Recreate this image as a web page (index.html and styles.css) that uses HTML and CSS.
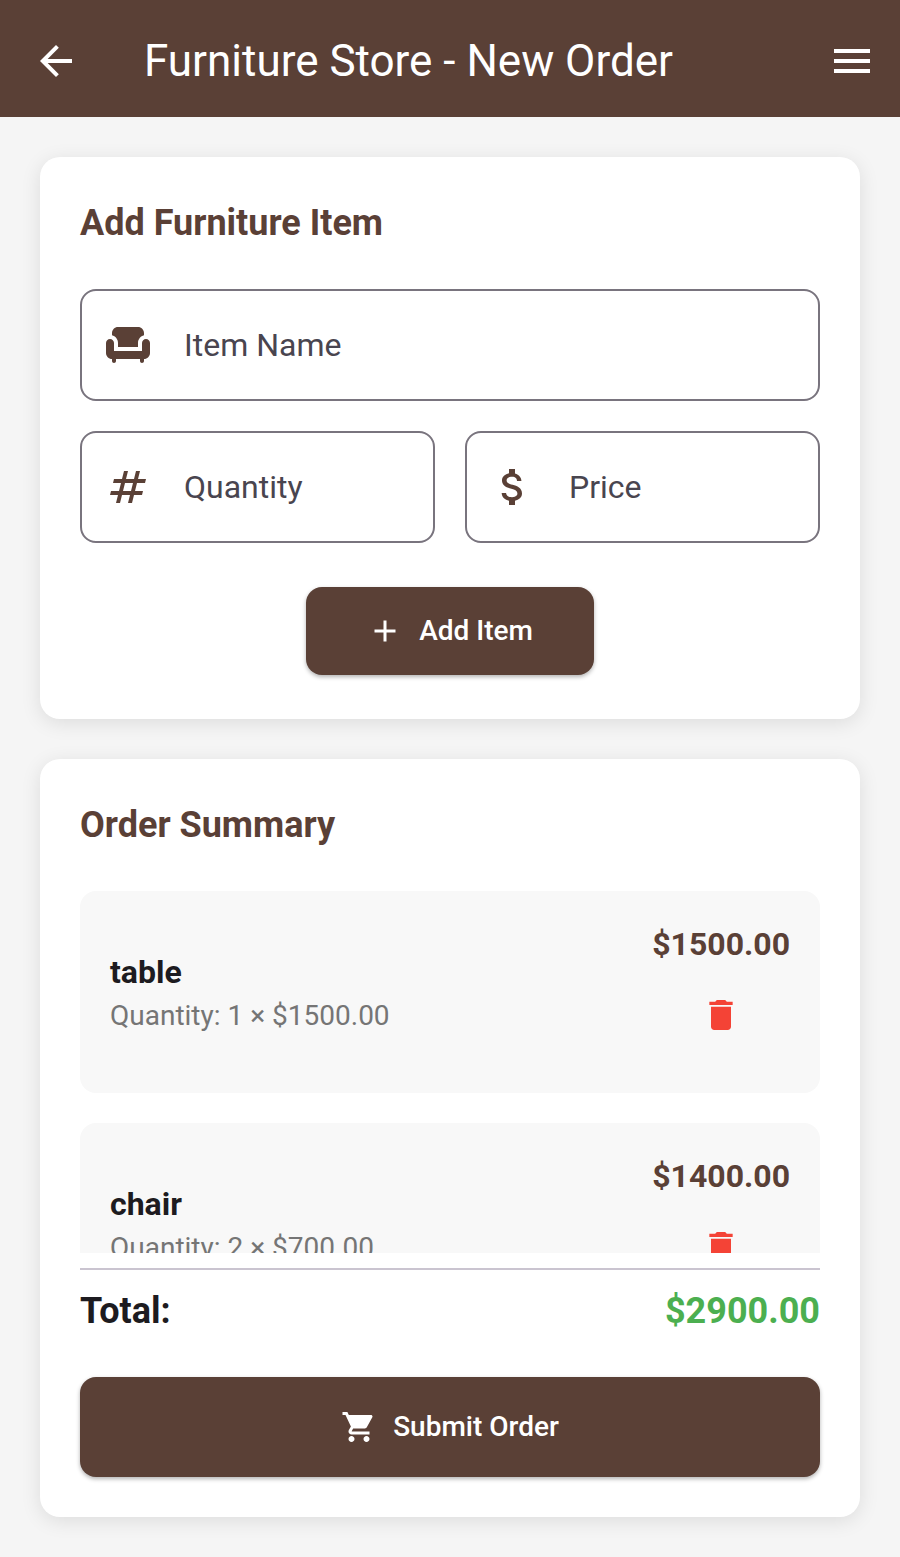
FILE: index.html
```html
<!DOCTYPE html>
<html lang="en">
<head>
<meta charset="utf-8">
<meta name="viewport" content="width=device-width, initial-scale=1">
<title>Furniture Store - New Order</title>
<link rel="stylesheet" href="styles.css">
</head>
<body>
<header class="app-bar">
  <button class="icon-button" type="button" aria-label="Back">
    <svg class="icon icon-large" viewBox="0 0 24 24"><path d="M20 11H7.83l5.59-5.59L12 4l-8 8 8 8 1.41-1.41L7.83 13H20v-2z"/></svg>
  </button>
  <h1 class="app-title">Furniture Store - New Order</h1>
  <button class="icon-button" type="button" aria-label="Menu">
    <svg class="icon icon-large" viewBox="0 0 24 24"><path d="M3 18h18v-2H3v2zm0-5h18v-2H3v2zm0-7v2h18V6H3z"/></svg>
  </button>
</header>
<main class="content">
  <form class="card add-card">
    <h2 class="card-title">Add Furniture Item</h2>
    <div class="fields">
      <label class="field field-wide">
        <svg class="icon icon-large" viewBox="0 0 24 24"><path d="M7 11v2h10v-2c0-1.86 1.28-3.41 3-3.86V6c0-1.65-1.35-3-3-3H7C5.35 3 4 4.35 4 6v1.14c1.72.45 3 2 3 3.86z"/><path d="M21 9c-1.1 0-2 .9-2 2v4H5v-4c0-1.1-.9-2-2-2s-2 .9-2 2v5c0 1.65 1.35 3 3 3v1c0 .55.45 1 1 1s1-.45 1-1v-1h12v1c0 .55.45 1 1 1s1-.45 1-1v-1c1.65 0 3-1.35 3-3v-5c0-1.1-.9-2-2-2z"/></svg>
        <input class="field-input" type="text" placeholder="Item Name" aria-label="Item Name">
      </label>
      <label class="field">
        <svg class="icon icon-large" viewBox="0 0 24 24"><path d="M20.5 10l.5-2h-4l1-4h-2l-1 4h-4l1-4h-2L9 8H5l-.5 2h4l-1 4h-4L3 16h4l-1 4h2l1-4h4l-1 4h2l1-4h4l.5-2h-4l1-4h4zm-7 4h-4l1-4h4l-1 4z"/></svg>
        <input class="field-input" type="text" inputmode="numeric" placeholder="Quantity" aria-label="Quantity">
      </label>
      <label class="field">
        <svg class="icon icon-large" viewBox="0 0 24 24"><path d="M11.8 10.9c-2.27-.59-3-1.2-3-2.15 0-1.09 1.01-1.85 2.7-1.85 1.78 0 2.44.85 2.5 2.1h2.21c-.07-1.72-1.12-3.3-3.21-3.81V3h-3v2.16c-1.94.42-3.5 1.68-3.5 3.61 0 2.31 1.91 3.46 4.7 4.13 2.5.6 3 1.48 3 2.41 0 .69-.49 1.79-2.7 1.79-2.06 0-2.87-.92-2.98-2.1h-2.2c.12 2.19 1.76 3.42 3.68 3.83V21h3v-2.15c1.95-.37 3.5-1.5 3.5-3.55 0-2.84-2.43-3.81-4.7-4.4z"/></svg>
        <input class="field-input" type="text" inputmode="decimal" placeholder="Price" aria-label="Price">
      </label>
    </div>
    <button class="button add-button" type="button">
      <svg class="icon icon-small" viewBox="0 0 24 24"><path d="M19 13h-6v6h-2v-6H5v-2h6V5h2v6h6v2z"/></svg>
      Add Item
    </button>
  </form>
  <section class="card summary-card">
    <h2 class="card-title">Order Summary</h2>
    <ul class="order-list">
      <li class="order-item">
        <div class="item-info">
          <h3 class="item-name">table</h3>
          <p class="item-detail">Quantity: 1 × $1500.00</p>
        </div>
        <div class="item-side">
          <span class="item-price">$1500.00</span>
          <button class="delete-button" type="button" aria-label="Delete table">
            <svg class="icon icon-medium" viewBox="0 0 24 24"><path d="M6 19c0 1.1.9 2 2 2h8c1.1 0 2-.9 2-2V7H6v12zM19 4h-3.5l-1-1h-5l-1 1H5v2h14V4z"/></svg>
          </button>
        </div>
      </li>
      <li class="order-item">
        <div class="item-info">
          <h3 class="item-name">chair</h3>
          <p class="item-detail">Quantity: 2 × $700.00</p>
        </div>
        <div class="item-side">
          <span class="item-price">$1400.00</span>
          <button class="delete-button" type="button" aria-label="Delete chair">
            <svg class="icon icon-medium" viewBox="0 0 24 24"><path d="M6 19c0 1.1.9 2 2 2h8c1.1 0 2-.9 2-2V7H6v12zM19 4h-3.5l-1-1h-5l-1 1H5v2h14V4z"/></svg>
          </button>
        </div>
      </li>
    </ul>
    <hr class="divider">
    <div class="total">
      <span>Total:</span>
      <span class="total-amount">$2900.00</span>
    </div>
    <button class="button submit-button" type="button">
      <svg class="icon icon-small" viewBox="0 0 24 24"><path d="M7 18c-1.1 0-1.99.9-1.99 2S5.9 22 7 22s2-.9 2-2-.9-2-2-2zM1 2v2h2l3.6 7.59-1.35 2.45c-.16.28-.25.61-.25.96 0 1.1.9 2 2 2h12v-2H7.42c-.14 0-.25-.11-.25-.25l.03-.12.9-1.63h7.45c.75 0 1.41-.41 1.75-1.03l3.58-6.49c.08-.14.12-.31.12-.48 0-.55-.45-1-1-1H5.21l-.94-2H1zm16 16c-1.1 0-1.99.9-1.99 2s.89 2 1.99 2 2-.9 2-2-.9-2-2-2z"/></svg>
      Submit Order
    </button>
  </section>
</main>
</body>
</html>
```

FILE: styles.css
```css
:root {
  --brown: #5a4036;
  --ink: #1d1b20;
}

* {
  box-sizing: border-box;
}

body {
  display: flex;
  flex-direction: column;
  height: 100vh;
  margin: 0;
  background: #f5f5f5;
  color: var(--ink);
  font-family: Roboto, "Liberation Sans", sans-serif;
}

h1, h2, h3, p, ul {
  margin: 0;
  padding: 0;
}

button {
  border: 0;
  font-family: inherit;
  cursor: pointer;
}

.icon {
  display: block;
  flex: none;
  fill: currentColor;
}

.icon-large {
  width: 48px;
  height: 48px;
}

.icon-medium {
  width: 40px;
  height: 40px;
}

.icon-small {
  width: 36px;
  height: 36px;
}

.app-bar {
  display: flex;
  flex: none;
  align-items: center;
  padding: 37px 24px 32px 32px;
  background: var(--brown);
  color: #fff;
}

.icon-button {
  padding: 0;
  background: none;
  color: inherit;
}

.app-title {
  flex: 1;
  margin-left: 64px;
  font-size: 44px;
  font-weight: 400;
  line-height: 48px;
}

.content {
  display: flex;
  flex: 1;
  flex-direction: column;
  gap: 40px;
  min-height: 0;
  padding: 40px;
}

.card {
  display: flex;
  flex-direction: column;
  padding: 40px;
  border-radius: 20px;
  background: #fff;
  box-shadow: 0 4px 20px rgba(0, 0, 0, 0.1);
}

.add-card {
  flex: none;
  padding-bottom: 44px;
}

.summary-card {
  flex: 1;
  min-height: 0;
}

.card-title {
  margin-bottom: 40px;
  color: var(--brown);
  font-size: 36px;
  font-weight: 700;
  line-height: 52px;
}

.fields {
  display: grid;
  grid-template-columns: 1fr 1fr;
  gap: 30px;
}

.field {
  display: flex;
  align-items: center;
  gap: 32px;
  min-width: 0;
  height: 112px;
  padding: 0 22px;
  border: 2px solid #79747e;
  border-radius: 16px;
  color: var(--brown);
}

.field-wide {
  grid-column: 1 / -1;
}

.field-input {
  flex: 1;
  min-width: 0;
  padding: 0;
  border: 0;
  outline: 0;
  background: none;
  color: var(--ink);
  font-family: inherit;
  font-size: 32px;
  line-height: 48px;
}

.field-input::placeholder {
  color: #49454f;
  opacity: 1;
}

.button {
  display: flex;
  align-items: center;
  justify-content: center;
  gap: 16px;
  border-radius: 16px;
  background: var(--brown);
  box-shadow: 0 2px 4px rgba(0, 0, 0, 0.3);
  color: #fff;
  font-size: 28px;
  font-weight: 500;
  line-height: 40px;
}

.add-button {
  align-self: center;
  margin-top: 44px;
  padding: 24px 61px;
}

.submit-button {
  flex: none;
  margin-top: 40px;
  padding: 30px;
}

.order-list {
  display: flex;
  flex: 1;
  flex-direction: column;
  gap: 30px;
  min-height: 0;
  overflow-y: auto;
  list-style: none;
  scrollbar-width: none;
}

.order-item {
  display: flex;
  flex: none;
  align-items: center;
  justify-content: space-between;
  padding: 30px;
  border-radius: 16px;
  background: #f8f8f8;
}

.item-name {
  font-size: 32px;
  font-weight: 700;
  line-height: 48px;
}

.item-detail {
  color: #757575;
  font-size: 28px;
  line-height: 40px;
}

.item-side {
  display: flex;
  flex-direction: column;
  align-items: center;
}

.item-price {
  color: var(--brown);
  font-size: 32px;
  font-weight: 700;
  line-height: 46px;
}

.delete-button {
  padding: 28px;
  background: none;
  color: #f44336;
}

.divider {
  flex: none;
  width: 100%;
  height: 2px;
  margin: 15px 0;
  border: 0;
  background: #cac4d0;
}

.total {
  display: flex;
  flex: none;
  justify-content: space-between;
  font-size: 36px;
  font-weight: 700;
  line-height: 52px;
}

.total-amount {
  color: #4caf50;
}
```
